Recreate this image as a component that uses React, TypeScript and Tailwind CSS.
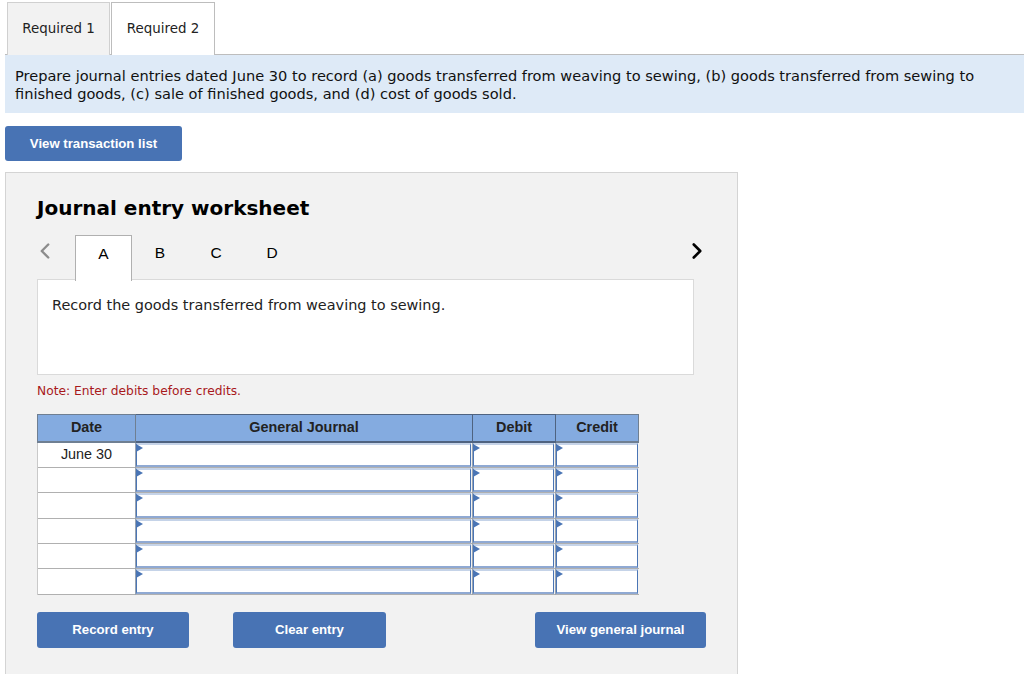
import { ChevronLeft, ChevronRight } from 'lucide-react';

const verdana = "font-['DejaVu_Sans',sans-serif]";
const arial = "font-['Liberation_Sans',Arial,sans-serif]";

const rows = ['June 30', '', '', '', '', ''];

function InputCell() {
  return (
    <td className="relative p-0 border-l border-[#98a3b1]">
      <div className="relative h-[24.4px] mr-[1px] bg-white border border-[#4a75b5] border-b-2 border-b-[#8fa9d3] border-t-2 border-t-[#c5d3e8]">
        <svg className="absolute left-[-1px] top-[-1px]" width="7" height="8" viewBox="0 0 7 8">
          <polygon points="0,0 7,4 0,8" fill="#4a75b5" />
        </svg>
      </div>
    </td>
  );
}

function BlueButton({ label, className }: { label: string; className: string }) {
  return (
    <button className={`${className} rounded-[3px] bg-[#4873b4] text-white text-[13.2px] font-bold ${arial}`}>
      {label}
    </button>
  );
}

export default function App() {
  return (
    <div className={`w-[1024px] h-[674px] overflow-hidden bg-white text-black ${verdana}`}>
      {/* top tabs */}
      <div className="ml-[5px] h-[55px] pt-[2px] pl-[2px] flex gap-[1px] border-b border-[#bdbdbd]">
        <div className="w-[103px] h-[53px] flex items-center justify-center bg-[#f2f2f2] border border-b-0 border-[#d0d0d0] text-[13.4px] text-[#222]">
          Required 1
        </div>
        <div className="w-[104px] h-[53px] flex items-center justify-center bg-white border border-b-0 border-[#bdbdbd] text-[13.4px] text-[#222]">
          Required 2
        </div>
      </div>

      <div className="ml-[5px] h-[58px] bg-[#deeaf7] pl-[10px] pt-[12px] text-[14.58px] leading-[18px] text-[#111]">
        Prepare journal entries dated June 30 to record (a) goods transferred from weaving to sewing, (b) goods transferred from sewing to
        <br />
        finished goods, (c) sale of finished goods, and (d) cost of goods sold.
      </div>

      <div className="ml-[5px] mt-[13px] flex">
        <BlueButton label="View transaction list" className="w-[177px] h-[35px]" />
      </div>

      {/* worksheet panel */}
      <div className="ml-[5px] mt-[11px] w-[733px] h-[520px] bg-[#f2f2f2] border border-[#d4d4d4] pl-[31px] pt-[21px]">
        <h2 className="text-[20px] leading-[28px] font-bold">Journal entry worksheet</h2>

        <div className="relative z-10 mt-[13px] w-[657px] h-[46px] flex items-start">
          <ChevronLeft className="w-[26px] h-[26px] mt-[3px] text-[#8c8c8c] -ml-[5px]" strokeWidth={2.2} />
          <div className="ml-[17px] flex">
            <div className={`w-[57px] h-[46px] pt-[6px] text-center text-[15.5px] bg-white border border-b-0 border-[#b0b0b0] ${arial}`}>A</div>
            <div className={`w-[56px] pt-[6px] text-center text-[15.5px] ${arial}`}>B</div>
            <div className={`w-[56px] pt-[6px] text-center text-[15.5px] ${arial}`}>C</div>
            <div className={`w-[56px] pt-[6px] text-center text-[15.5px] ${arial}`}>D</div>
          </div>
          <ChevronRight className="ml-auto w-[26px] h-[26px] mt-[3px] -mr-[16px] text-black" strokeWidth={2.4} />
        </div>

        <div className="-mt-[2px] w-[657px] h-[96px] bg-white border border-[#dadada] pl-[14px] pt-[15px] text-[14.44px] leading-[20px] text-[#222]">
          Record the goods transferred from weaving to sewing.
        </div>

        <p className="mt-[8px] h-[16px] text-[12.25px] leading-[16px] text-[#a8191c]">Note: Enter debits before credits.</p>

        <table className={`mt-[15px] w-[601px] border-collapse table-fixed ${arial}`}>
          <colgroup>
            <col className="w-[98px]" />
            <col className="w-[337px]" />
            <col className="w-[83px]" />
            <col className="w-[83px]" />
          </colgroup>
          <thead>
            <tr className="h-[27px] bg-[#84abe0] text-[14.4px] font-bold text-[#222]">
              <th className="border border-[#6f7f92] border-b-2">Date</th>
              <th className="border border-[#4f6380] border-b-2">General Journal</th>
              <th className="border border-[#4f6380] border-b-2">Debit</th>
              <th className="border border-[#6f7f92] border-b-2">Credit</th>
            </tr>
          </thead>
          <tbody>
            {rows.map((date, i) => (
              <tr key={i} className="border-b border-[#b0b0b0]">
                <td className="p-0 bg-white border-l border-[#c9c9c9] text-center text-[14.4px] text-[#222]">{date}</td>
                <InputCell />
                <InputCell />
                <InputCell />
              </tr>
            ))}
          </tbody>
        </table>

        <div className="mt-[17px] w-[669px] flex">
          <BlueButton label="Record entry" className="w-[152px] h-[36px]" />
          <div className="ml-[44px]">
            <BlueButton label="Clear entry" className="w-[153px] h-[36px]" />
          </div>
          <div className="ml-auto">
            <BlueButton label="View general journal" className="w-[171px] h-[36px]" />
          </div>
        </div>
      </div>
    </div>
  );
}
